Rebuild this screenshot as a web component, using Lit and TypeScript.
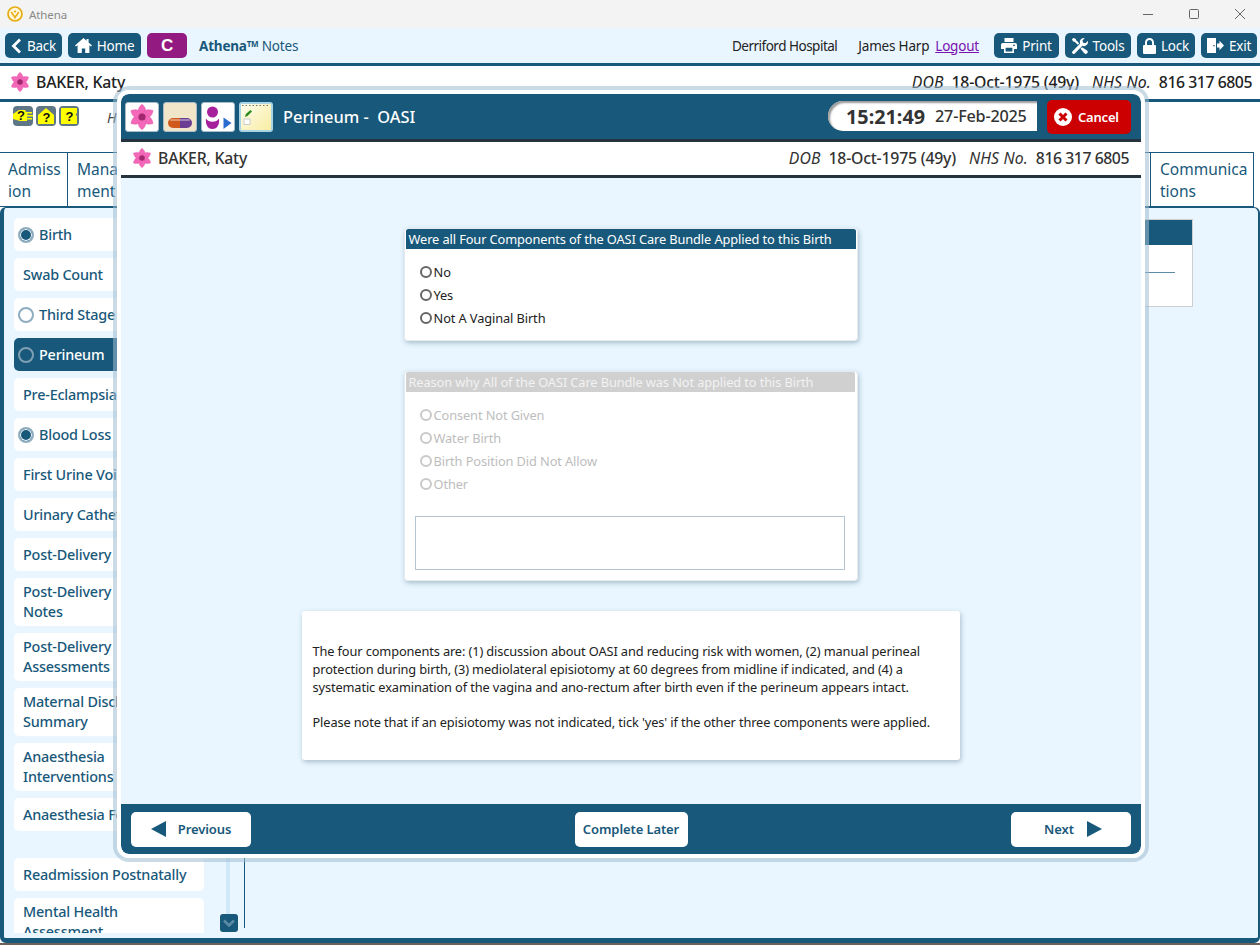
import { LitElement, html, css, svg } from "lit";
import { customElement } from "lit/decorators.js";

const flower = (size: number) => html`<svg class="flower" width=${size} height=${size} viewBox="0 0 24 24">
  <g fill="#f368b8" stroke="#e253a6" stroke-width="0.4">
    ${[0, 60, 120, 180, 240, 300].map(
      (a) => svg`<path transform="rotate(${a} 12 12)" d="M12 .2C16.600 4 16.800 9 12 12.500 7.200 9 7.400 4 12 .2Z"/>`
    )}
  </g>
  <circle cx="12" cy="12" r="3.300" fill="#a3276f"/>
</svg>`;

const icons = {
  back: html`<svg width="11" height="16" viewBox="0 0 11 16"><path d="M9 1.500 2.500 8 9 14.500" fill="none" stroke="#fff" stroke-width="2.800"/></svg>`,
  home: html`<svg width="17" height="15" viewBox="0 0 17 15"><path fill="#fff" d="M8.500 0 0 7.600l1 1L2.600 7.300V15h4.200v-4.600h3.400V15h4.200V7.300L16 8.600l1-1L13.600 4.600V1h-2v1.800z"/></svg>`,
  print: html`<svg width="16" height="15" viewBox="0 0 16 15"><path fill="#fff" d="M3.500 0h9v4h-9zM1.800 5h12.400A1.800 1.800 0 0 1 16 6.800V11h-3v4H3v-4H0V6.800A1.800 1.800 0 0 1 1.800 5zM4.600 9.800v3.700h6.800V9.800zM13 6.400a.9.9 0 1 0 0 1.800.9.9 0 0 0 0-1.800z"/></svg>`,
  tools: html`<svg width="16" height="16" viewBox="0 0 16 16"><g fill="#fff"><path d="M11.800 0a4 4 0 0 0-3.600 5.600L.6 13.200a1.500 1.500 0 0 0 2.200 2.200l7.600-7.600A4 4 0 0 0 15.800 3l-2.400 2.300-2.300-.6-.6-2.200L12.800.1A4 4 0 0 0 11.800 0z"/><path d="M1.200 0 0 1.200l1 2.200 1.700.4 3 3L7.200 5.300l-3-3-.6-1.600zM10 9.300l-1.500 1.500 3.800 4.500a1.700 1.700 0 0 0 2.800-2.800z"/></g></svg>`,
  lock: html`<svg width="13" height="16" viewBox="0 0 13 16"><path fill="#fff" d="M6.500 0A4.500 4.500 0 0 0 2 4.500V7H1a1 1 0 0 0-1 1v7a1 1 0 0 0 1 1h11a1 1 0 0 0 1-1V8a1 1 0 0 0-1-1h-1V4.500A4.500 4.500 0 0 0 6.500 0zM4 4.500a2.500 2.500 0 0 1 5 0V7H4z"/></svg>`,
  exit: html`<svg width="17" height="15" viewBox="0 0 17 15"><path fill="#fff" d="M0 0h9v15H0zM7 7a.8.8 0 1 0 0 1.600A.8.8 0 0 0 7 7zM10 5.500h2.500V2.800L17 7.500l-4.500 4.700V9.500H10z"/></svg>`,
  cancel: html`<svg width="18" height="18" viewBox="0 0 18 18"><circle cx="9" cy="9" r="9" fill="#fff"/><path d="M5.500 5.500l7 7M12.500 5.500l-7 7" stroke="#cc0000" stroke-width="3"/></svg>`,
  pill: html`<svg width="26" height="26" viewBox="0 0 26 26"><path d="M6 14h7v10H6a5 5 0 0 1 0-10z" fill="#d05a1c"/><path d="M13 14h7a5 5 0 0 1 0 10h-7z" fill="#6b3e94"/><rect x="3" y="15" width="20" height="2" rx="1" fill="#fff" opacity=".35"/></svg>`,
  person: html`<svg width="32" height="28" viewBox="0 0 32 28"><circle cx="10.500" cy="9" r="5.500" fill="#a6209c"/><path d="M4 15.500c1.500 2.500 3.500 3.200 6.500 3.200s5-.7 6.500-3.200c.8 5.500-1.500 10.500-6.500 10.500s-7.300-5-6.500-10.500z" fill="#a6209c"/><path d="M21.500 14.500l8 5.500-8 6z" fill="#2a6bd0"/></svg>`,
  note: html`<svg width="30" height="30" viewBox="0 0 30 30"><defs><linearGradient id="n" x1="0" y1="0" x2="1" y2="1"><stop offset="0" stop-color="#fdfdf0"/><stop offset="1" stop-color="#f8ec9f"/></linearGradient></defs><rect x="0" y="0" width="30" height="30" fill="url(#n)"/><path d="M1 3.500h28" stroke="#777" stroke-dasharray="1.500 2"/><rect x="3" y="17" width="6" height="5.500" fill="#fff" stroke="#ccc"/><path d="M4 15l.8-3L9.500 8l1.500 1.500-4.500 4.500z" fill="#2a8a1e"/></svg>`,
  hand: html`<svg width="20" height="20" viewBox="0 0 20 20"><rect width="20" height="20" rx="4" fill="#5e7686"/><path d="M0 8l6-4h6l1 2h6v1.500h-5l.5 1.500H20v1.500h-6l.2 1.500H19v1.500h-5v1.500H7L0 13z" fill="#ffff00"/><text x="4" y="13.500" class="qm">?</text></svg>`,
  house: html`<svg width="20" height="20" viewBox="0 0 20 20"><rect width="20" height="20" rx="4" fill="#5e7686"/><path d="M10 2l8 7v9H2V9z" fill="#ffff00"/><text x="6.500" y="15.500" class="qm">?</text></svg>`,
  chat: html`<svg width="20" height="20" viewBox="0 0 20 20"><rect width="20" height="20" rx="4" fill="#5e7686"/><path d="M2 2h16v5l-1.500 1.500L18 10v8H2z" fill="#ffff00"/><text x="6.500" y="15" class="qm">?</text></svg>`,
  logo: html`<svg width="16" height="16" viewBox="0 0 16 16"><circle cx="8" cy="8" r="7" fill="#fff6d8" stroke="#e6ad12" stroke-width="1.700"/><path d="M4.500 6c.5 2.500 2.500 3 3.500 5.500C9 9 11 8.500 11.500 6" fill="none" stroke="#e6ad12" stroke-width="1.600"/><circle cx="8" cy="5.500" r="1.100" fill="#e6ad12"/></svg>`,
  left: html`<svg width="16" height="16" viewBox="0 0 16 16"><path d="M0 8l15-8v16z" fill="#18587a"/></svg>`,
  right: html`<svg width="16" height="16" viewBox="0 0 16 16"><path d="M16 8L1 0v16z" fill="#18587a"/></svg>`,
  down: html`<svg width="12" height="9" viewBox="0 0 12 9"><path d="M1 1.500l5 5 5-5" fill="none" stroke="#5d8ba6" stroke-width="2.600"/></svg>`,
};

type Nav = { t: string; t2?: string; r?: "on" | "off"; active?: boolean };
const nav: Nav[] = [
  { t: "Birth", r: "on" },
  { t: "Swab Count" },
  { t: "Third Stage", r: "off" },
  { t: "Perineum", r: "off", active: true },
  { t: "Pre-Eclampsia" },
  { t: "Blood Loss", r: "on" },
  { t: "First Urine Void" },
  { t: "Urinary Catheter" },
  { t: "Post-Delivery" },
  { t: "Post-Delivery", t2: "Notes" },
  { t: "Post-Delivery", t2: "Assessments" },
  { t: "Maternal Discharge", t2: "Summary" },
  { t: "Anaesthesia", t2: "Interventions" },
  { t: "Anaesthesia Follow" },
];

@customElement("app-root")
export class AppRoot extends LitElement {
  static styles = css`
    :host {
      display: block;
      width: 1260px;
      height: 945px;
      position: relative;
      overflow: hidden;
      background: #6d5f5a;
      font-family: "Noto Sans", sans-serif;
      color: #222;
      letter-spacing: -0.2px;
    }
    .page { display: flex; flex-direction: column; height: 943px; background: #fff; }
    .titlebar {
      height: 28px; background: #f3f3f3; display: flex; align-items: center;
      padding-left: 7px; gap: 6px; font-size: 11.500px; color: #8a8a8a; letter-spacing: -0.1px;
      flex: none;
    }
    .winctl { margin-left: auto; display: flex; gap: 36px; padding-right: 15px; align-items: center; }
    .topbar {
      height: 35px; background: #e9f6ff; border-bottom: 3px solid #18587a; flex: none;
      display: flex; align-items: center; padding: 0 3px 0 5px; font-size: 14px; box-sizing: content-box;
    }
    .btn {
      height: 25px; background: #18587a; color: #fff; border-radius: 5px; display: flex;
      align-items: center; justify-content: center; gap: 5px; box-sizing: border-box; font-size: 13.500px;
    }
    .w-back { width: 57px; margin-right: 6px; }
    .w-home { width: 73px; margin-right: 6px; }
    .w-c { width: 40px; background: #931a80; font-family: "Liberation Sans", sans-serif; font-weight: 700; font-size: 17px; margin-right: 12px; }
    .w-print { width: 65px; margin-right: 6px; }
    .w-tools { width: 66px; margin-right: 6px; }
    .w-lock { width: 58px; margin-right: 6px; }
    .w-exit { width: 56px; }
    .brand { color: #18587a; font-size: 13.500px; }
    .brand b { font-weight: 700; }
    .brand sup { font-size: 8px; font-weight: 700; vertical-align: 4px; line-height: 0; }
    .top-right { margin-left: auto; display: flex; align-items: center; font-size: 13.500px; }
    .hosp { margin-right: 21px; letter-spacing: -0.5px; }
    .user { margin-right: 6px; }
    .logout { color: #7a12b0; text-decoration: underline; margin-right: 15px; }
    .patient {
      display: flex; align-items: center;
      padding: 0 8px 2px 10px; flex: none; background: #fff; font-size: 15.800px; color: #222;
      box-sizing: border-box; height: 36px; border-bottom: 3px solid #18587a;
    }
    .patient .name { font-weight: 500; margin-left: 6px; }
    .pinfo { margin-left: auto; display: flex; gap: 8px; align-items: baseline; }
    .pinfo i { font-weight: 400; letter-spacing: 0.1px; }
    .pinfo span { font-weight: 500; margin-right: 5px; }
    .pinfo span:last-child { margin-right: 0; letter-spacing: -0.45px; }
    .helpbar { height: 50px; flex: none; display: flex; padding: 4px 0 0 13px; gap: 3px; box-sizing: border-box; background: #fff; }
    .helpbar i { margin-left: 25px; font-size: 14px; margin-top: 2px; color: #444; }
    .qm { font: 700 13px "Liberation Sans", sans-serif; fill: #111; }
    .tabs {
      height: 55px; flex: none; display: flex; width: 1254px; box-sizing: border-box;
      border: 1px solid #18587a; border-left: none; background: #fff;
    }
    .tab {
      font-size: 15.500px; line-height: 22px; color: #18587a; padding: 5px 8px 0 8px;
      border-right: 1px solid #18587a; box-sizing: border-box; letter-spacing: 0;
    }
    .tab.a { width: 68px; }
    .tab.b { width: 1083px; padding-left: 9px; }
    .tab.c { flex: 1; border-right: none; padding-left: 9px; padding-right: 0; }
    .panel {
      flex: 1; min-height: 0; display: flex; background: #e9f6ff; border: solid #18587a;
      border-width: 1px 2px 5px 4px; border-radius: 6px; box-sizing: border-box; overflow: hidden;
    }
    .side {
      width: 200px; flex: none; height: 715px; margin-top: 10px; padding-left: 10px; box-sizing: border-box;
      display: flex; flex-direction: column; gap: 7px; overflow: hidden;
    }
    .item {
      flex: none; min-height: 33px; background: #fff; border-radius: 5px; color: #18587a;
      font-size: 14.400px; font-weight: 500; line-height: 20px; display: flex; align-items: center;
      padding: 0 9px; box-sizing: border-box;
    }
    .item.two { padding-top: 4px; padding-bottom: 4px; height: 48px; }
    .item.radio { padding-left: 4px; gap: 5px; }
    .item.active { background: #18587a; color: #fff; }
    .spacer { flex: none; height: 13px; }
    .dot {
      width: 16px; height: 16px; flex: none; border-radius: 50%; box-sizing: border-box;
      border: 2px solid #8fadc0; background: #fff;
    }
    .dot.on { background: #18587a; box-shadow: inset 0 0 0 1px #fff; }
    .item.active .dot { background: #18587a; border-color: #7f9fb4; }
    .scroll { width: 40px; flex: none; position: relative; display: flex; justify-content: center; }
    .track { width: 4px; margin: 0 0 6px 8px; background: #cfe9fa; }
    .sdown {
      position: absolute; left: 16px; top: 706px; width: 18px; height: 18px; background: #18587a;
      border-radius: 3px; display: flex; align-items: center; justify-content: center;
    }
    .main { flex: 1; min-width: 0; display: flex; flex-direction: column; align-items: flex-end; margin-bottom: 10px; border-left: 1px solid #18587a; padding: 11px 65px 0 0; }
    .bgcard { width: 400px; height: 88px; border: 1px solid #cfcfcf; background: #fff; box-sizing: border-box; }
    .bghead { height: 25px; background: #18587a; }
    .bgline { height: 1px; margin: 27px 17px 0 20px; background: #5d8ba6; }
    /* Modal dialog laid over the page */
    .modal {
      position: absolute; left: 113px; top: 86px; width: 1036px; height: 776px; box-sizing: border-box;
      border: 4px solid rgba(160, 190, 210, 0.55); border-radius: 16px; background-clip: padding-box;
    }
    .modal-in {
      height: 100%; box-sizing: border-box; border: 4px solid #fff; border-radius: 12px;
      display: flex; flex-direction: column; overflow: hidden; background: #fff;
    }
    .mhead {
      height: 45px; flex: none; background: #18587a; display: flex; align-items: center; padding: 0 10px 0 4px;
      border-radius: 8px 8px 0 0;
    }
    .ic {
      width: 34px; height: 30px; box-sizing: border-box; border-radius: 3px; background: #fff; margin-right: 4px;
      border: 1px solid #a8bcc9; display: flex; align-items: center; justify-content: center; overflow: hidden;
    }
    .ic.pill { background: #f1e5c9; }
    .ic.note { border: 2px solid #a8d4e6; background: #fdf8cc; }
    .mtitle { color: #fff; font-size: 16.400px; font-weight: 500; margin-left: 6px; white-space: pre; letter-spacing: 0; }
    .clock {
      margin-left: auto; width: 209px; height: 30px; box-sizing: border-box; background: #fff;
      border-radius: 15px 0 0 15px; box-shadow: inset 2px 2px 2px #9a9a9a; display: flex; align-items: center;
      padding-left: 18px; gap: 10px; color: #333; margin-right: 10px; margin-top: -1px;
    }
    .clock b { font-size: 19.800px; letter-spacing: 0; }
    .clock span { font-size: 16.200px; font-weight: 500; }
    .cancel {
      width: 84px; height: 34px; background: #cc0000; color: #fff; border-radius: 5px; display: flex;
      align-items: center; gap: 6px; padding-left: 7px; box-sizing: border-box; font-size: 13px; font-weight: 600;
    }
    .mpat {
      height: 39px; flex: none; display: flex; align-items: center; background: #fff; color: #333;
      border-top: 3px solid #26323d; border-bottom: 3px solid #26323d; padding: 0 12px 2px 11px;
      font-size: 15.800px; box-sizing: border-box;
    }
    .mpat .name { font-weight: 500; margin-left: 6px; }
    .mbody {
      flex: 1; min-height: 0; background: #e9f6ff; display: flex; flex-direction: column; align-items: center;
      padding-top: 50px; box-sizing: border-box; gap: 30px;
    }
    .card {
      width: 454px; background: #fff; border: 1px solid #fff; border-radius: 4px; box-sizing: border-box;
      box-shadow: 1px 2px 5px rgba(90, 120, 140, 0.45); outline: 1px solid #e4ecf1; outline-offset: -1px;
      margin-right: 1px;
    }
    .chead {
      height: 20px; background: #18587a; color: #fff; font-size: 12.800px; line-height: 20px; padding-left: 3px;
      margin: 0 1px; letter-spacing: -0.1px; white-space: nowrap; border-radius: 2px 2px 0 0;
    }
    .card.off .chead { background: #d0d0d0; color: #f2f2f2; margin-right: 2px; }
    .opts { display: flex; flex-direction: column; padding: 11px 0 0 15px; }
    .opt { height: 23px; display: flex; align-items: center; font-size: 12.800px; color: #222; letter-spacing: -0.1px; gap: 2px; }
    .rad { width: 12px; height: 12px; box-sizing: border-box; border-radius: 50%; border: 2px solid #666; background: #fff; flex: none; }
    .card.off .opt { color: #bdbdbd; }
    .card.off .rad { border-color: #c9c9c9; }
    .c1 { height: 113px; }
    .c2 { height: 210px; }
    .ta { height: 54px; margin: 21px 12px 0 10px; border: 1px solid #b4c4d2; box-sizing: border-box; background: #fff; }
    .info {
      width: 658px; height: 149px; background: #fff; border-radius: 3px; box-sizing: border-box; padding: 31px 11px 0 11px;
      box-shadow: 1px 2px 5px rgba(90, 120, 140, 0.45); font-size: 12.800px; line-height: 18px; color: #222;
      letter-spacing: -0.12px; margin-right: 1px;
    }
    .info p { margin: 0 0 17px; }
    .mfoot {
      height: 50px; flex: none; background: #18587a; display: flex; align-items: center; justify-content: space-between;
      padding: 0 10px; border-radius: 0 0 8px 8px;
    }
    .fb {
      height: 35px; background: #fff; color: #18587a; border-radius: 5px; display: flex; align-items: center;
      justify-content: center; font-size: 13px; font-weight: 600; letter-spacing: -0.1px; box-sizing: border-box;
    }
    .fb.prev { width: 120px; gap: 11px; }
    .fb.next { width: 120px; gap: 12px; padding-left: 4px; }
    .fb.mid { width: 113px; }
    svg { display: block; flex: none; }
  `;

  private pinfo() {
    return html`<div class="pinfo"><i>DOB</i><span>18-Oct-1975 (49y)</span><i>NHS No.</i><span>816 317 6805</span></div>`;
  }

  render() {
    return html`
      <div class="page">
        <div class="titlebar">
          ${icons.logo}<span>Athena</span>
          <div class="winctl">
            <svg width="10" height="10" viewBox="0 0 10 10"><path d="M0 5.500h10" stroke="#666"/></svg>
            <svg width="10" height="10" viewBox="0 0 10 10"><rect x=".5" y=".5" width="9" height="9" rx="1" fill="none" stroke="#666"/></svg>
            <svg width="10" height="10" viewBox="0 0 10 10"><path d="M0 0l10 10M10 0L0 10" stroke="#666"/></svg>
          </div>
        </div>
        <div class="topbar">
          <div class="btn w-back">${icons.back}Back</div>
          <div class="btn w-home">${icons.home}Home</div>
          <div class="btn w-c">C</div>
          <div class="brand"><b>Athena</b><sup>TM</sup> Notes</div>
          <div class="top-right">
            <span class="hosp">Derriford Hospital</span>
            <span class="user">James Harp</span>
            <span class="logout">Logout</span>
            <div class="btn w-print">${icons.print}Print</div>
            <div class="btn w-tools">${icons.tools}Tools</div>
            <div class="btn w-lock">${icons.lock}Lock</div>
            <div class="btn w-exit">${icons.exit}Exit</div>
          </div>
        </div>
        <div class="patient">${flower(20)}<span class="name">BAKER, Katy</span>${this.pinfo()}</div>
        <div class="helpbar">${icons.hand}${icons.house}${icons.chat}<i>H</i></div>
        <div class="tabs">
          <div class="tab a">Admiss<br />ion</div>
          <div class="tab b">Mana<br />ment</div>
          <div class="tab c">Communica<br />tions</div>
        </div>
        <div class="panel">
          <div class="side">
            ${nav.map(
              (n) => html`<div class="item ${n.r ? "radio" : ""} ${n.active ? "active" : ""} ${n.t2 ? "two" : ""}">
                ${n.r ? html`<span class="dot ${n.r}"></span>` : ""}<span>${n.t}${n.t2 ? html`<br />${n.t2}` : ""}</span>
              </div>`
            )}
            <div class="spacer"></div>
            <div class="item">Readmission Postnatally</div>
            <div class="item two"><span>Mental Health<br />Assessment</span></div>
          </div>
          <div class="scroll">
            <div class="track"></div>
            <div class="sdown">${icons.down}</div>
          </div>
          <div class="main">
            <div class="bgcard"><div class="bghead"></div><div class="bgline"></div></div>
          </div>
        </div>
      </div>

      <div class="modal">
        <div class="modal-in">
          <div class="mhead">
            <div class="ic">${flower(26)}</div>
            <div class="ic pill">${icons.pill}</div>
            <div class="ic">${icons.person}</div>
            <div class="ic note">${icons.note}</div>
            <div class="mtitle">Perineum -  OASI</div>
            <div class="clock"><b>15:21:49</b><span>27-Feb-2025</span></div>
            <div class="cancel">${icons.cancel}Cancel</div>
          </div>
          <div class="mpat">${flower(20)}<span class="name">BAKER, Katy</span>${this.pinfo()}</div>
          <div class="mbody">
            <div class="card c1">
              <div class="chead">Were all Four Components of the OASI Care Bundle Applied to this Birth</div>
              <div class="opts">
                <div class="opt"><span class="rad"></span>No</div>
                <div class="opt"><span class="rad"></span>Yes</div>
                <div class="opt"><span class="rad"></span>Not A Vaginal Birth</div>
              </div>
            </div>
            <div class="card c2 off">
              <div class="chead">Reason why All of the OASI Care Bundle was Not applied to this Birth</div>
              <div class="opts">
                <div class="opt"><span class="rad"></span>Consent Not Given</div>
                <div class="opt"><span class="rad"></span>Water Birth</div>
                <div class="opt"><span class="rad"></span>Birth Position Did Not Allow</div>
                <div class="opt"><span class="rad"></span>Other</div>
              </div>
              <div class="ta"></div>
            </div>
            <div class="info">
              <p>The four components are: (1) discussion about OASI and reducing risk with women, (2) manual perineal protection during birth, (3) mediolateral episiotomy at 60 degrees from midline if indicated, and (4) a systematic examination of the vagina and ano-rectum after birth even if the perineum appears intact.</p>
              <p>Please note that if an episiotomy was not indicated, tick 'yes' if the other three components were applied.</p>
            </div>
          </div>
          <div class="mfoot">
            <div class="fb prev">${icons.left}<span>Previous</span></div>
            <div class="fb mid">Complete Later</div>
            <div class="fb next"><span>Next</span>${icons.right}</div>
          </div>
        </div>
      </div>
    `;
  }
}
